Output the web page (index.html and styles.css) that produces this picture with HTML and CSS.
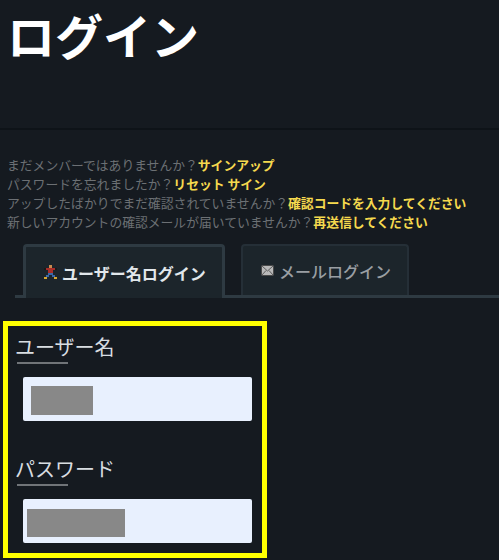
FILE: index.html
```html
<!DOCTYPE html>
<html lang="ja">
<head>
    <meta charset="UTF-8">
    <title>ログイン</title>
    <link rel="stylesheet" href="styles.css">
</head>
<body>
    <h1>ログイン</h1>
    <hr class="rule">

    <div class="links">
        <p>まだメンバーではありませんか？<a href="#">サインアップ</a></p>
        <p>パスワードを忘れましたか？<a href="#">リセット サイン</a></p>
        <p>アップしたばかりでまだ確認されていませんか？<a href="#">確認コードを入力してください</a></p>
        <p>新しいアカウントの確認メールが届いていませんか？<a href="#">再送信してください</a></p>
    </div>

    <div class="tabs">
        <div class="tab active">
            <svg class="icon" viewBox="0 0 15 15" width="15" height="15" shape-rendering="crispEdges">
                <rect x="6" y="0" width="3" height="3" fill="#c98a4e"/>
                <rect x="3" y="3" width="9" height="2" fill="#a82e2a"/>
                <rect x="1" y="3" width="2" height="2" fill="#1a1a1a"/>
                <rect x="12" y="3" width="2" height="2" fill="#1a1a1a"/>
                <rect x="5" y="5" width="5" height="3" fill="#a82e2a"/>
                <rect x="5" y="8" width="5" height="2" fill="#3a68a8"/>
                <rect x="3" y="10" width="3" height="2" fill="#3a68a8"/>
                <rect x="9" y="10" width="3" height="2" fill="#3a68a8"/>
                <rect x="1" y="12" width="3" height="2" fill="#d8a830"/>
                <rect x="11" y="12" width="3" height="2" fill="#d8a830"/>
            </svg>
            ユーザー名ログイン
        </div>
        <div class="tab">
            <svg class="icon" viewBox="0 0 13 11" width="13" height="11">
                <rect x="0.5" y="0.5" width="12" height="10" rx="1" fill="#b9b9b9" stroke="#4a4a4a"/>
                <path d="M1 1l5.500 5L12 1M1 10l4-4.500M12 10L8 5.500" fill="none" stroke="#5c5c5c"/>
            </svg>
            メールログイン
        </div>
    </div>

    <form class="login-box">
        <div class="field">
            <label>ユーザー名</label>
            <div class="input">
                <span class="mask mask-user"></span>
            </div>
        </div>
        <div class="field">
            <label>パスワード</label>
            <div class="input">
                <span class="mask mask-pass"></span>
            </div>
        </div>
    </form>
</body>
</html>
```

FILE: styles.css
```css
* {
    margin: 0;
    padding: 0;
    box-sizing: border-box;
}

body {
    background: #151a20;
    font-family: "Noto Sans CJK JP", "Noto Sans", sans-serif;
    height: 560px;
    overflow: hidden;
}

h1 {
    height: 128px;
    padding-left: 7px;
    font-size: 48px;
    line-height: 68px;
    font-weight: 700;
    color: #fff;
}

.rule {
    border: none;
    border-top: 2px solid #0e1318;
}

.links {
    margin-top: 25px;
    padding-left: 7px;
    font-size: 12.8px;
    line-height: 19px;
    color: #6c7074;
    white-space: nowrap;
}

.links a {
    color: #f5d94e;
    font-weight: 700;
    text-decoration: none;
}

.tabs {
    display: flex;
    gap: 16px;
    height: 54px;
    margin: 13px 0 0 15px;
    padding-left: 8px;
    border-bottom: 3px solid #2e3a42;
}

.tab {
    display: flex;
    align-items: center;
    gap: 5px;
    width: 168px;
    height: 51px;
    padding: 0 18px;
    background: #1c252b;
    border: 2px solid #252f37;
    border-bottom: none;
    border-radius: 4px 4px 0 0;
    font-size: 16px;
    font-weight: 500;
    color: #9a9fa3;
    white-space: nowrap;
}

.tab.active {
    gap: 4px;
    width: 202px;
    height: 54px;
    margin-bottom: -3px;
    padding: 0 17px;
    border: 3px solid #2e3a42;
    border-bottom: none;
    font-weight: 700;
    color: #e2e8ec;
}

.icon {
    flex-shrink: 0;
}

.login-box {
    width: 264px;
    height: 237px;
    margin: 23px 0 0 3px;
    padding: 7px 0 0 8px;
    border: 5px solid #ffff00;
}

.field {
    height: 122px;
}

.field label {
    display: block;
    width: 51px;
    height: 31px;
    margin-left: 1px;
    border-bottom: 2px solid #707478;
    font-size: 20px;
    line-height: 28px;
    color: #d8dde1;
    white-space: nowrap;
    text-indent: -2px;
}

.input {
    display: flex;
    align-items: center;
    width: 229px;
    height: 44px;
    margin: 13px 0 0 7px;
    background: #e8f0fe;
    border-radius: 2px;
}

.mask {
    display: block;
    background: #888;
}

.mask-user {
    width: 62px;
    height: 29px;
    margin: 2px 0 0 8px;
}

.mask-pass {
    width: 98px;
    height: 28px;
    margin: 4px 0 0 4px;
}
```
